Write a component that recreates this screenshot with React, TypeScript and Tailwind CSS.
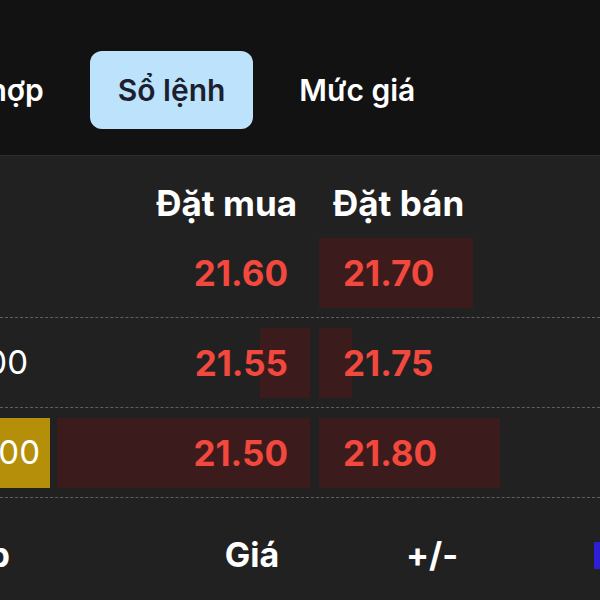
import React from 'react';

interface BookRow {
  volume: string;
  highlight?: boolean;
  buy: string;
  buyBar: number;
  sell: string;
  sellBar: number;
}

const rows: BookRow[] = [
  { volume: '', buy: '21.60', buyBar: 0, sell: '21.70', sellBar: 154 },
  { volume: '1.200', buy: '21.55', buyBar: 50, sell: '21.75', sellBar: 33 },
  { volume: '3.500', highlight: true, buy: '21.50', buyBar: 253, sell: '21.80', sellBar: 181 },
];

const tabs = ['Tổng hợp', 'Sổ lệnh', 'Mức giá'];

const App: React.FC = () => {
  return (
    <div
      className="w-[600px] h-[600px] overflow-hidden bg-[#212121] text-white"
      style={{ fontFamily: 'Inter, "Noto Sans", sans-serif' }}
    >
      {/* Tabs */}
      <div className="h-[156px] bg-[#121212] border-b border-[#2c2c2c] pt-[51px]">
        <div className="flex gap-[18px] ml-[-120px]">
          {tabs.map((tab) => (
            <div
              key={tab}
              className={`h-[78px] px-[28px] flex items-center rounded-[12px] text-[30px] font-semibold whitespace-nowrap ${
                tab === 'Sổ lệnh' ? 'bg-[#bde2fc] text-[#1b1f2e]' : 'text-white'
              }`}
            >
              {tab}
            </div>
          ))}
        </div>
      </div>

      {/* Column headers */}
      <div className="flex h-[72px] items-end pb-[7px] text-[35px] leading-[36px] font-bold">
        <div className="w-[50px] shrink-0" />
        <div className="ml-[7px] w-[253px] shrink-0 flex justify-end pr-[13px] whitespace-nowrap">
          Đặt mua
        </div>
        <div className="ml-[9px] w-[253px] shrink-0 pl-[14px] whitespace-nowrap">Đặt bán</div>
      </div>

      {/* Rows */}
      {rows.map((row) => (
        <div
          key={row.buy}
          className="flex pt-[10px] pb-[9px] border-b border-dashed border-[#5f5f5f]"
        >
          <div
            className={`w-[50px] h-[70px] shrink-0 flex items-center justify-end text-[33px] whitespace-nowrap ${
              row.highlight ? 'bg-[#b58f0a] pr-[10px]' : 'pr-[22px]'
            }`}
          >
            {row.volume}
          </div>
          <div className="ml-[7px] w-[253px] h-[70px] shrink-0 relative flex items-center justify-end pr-[22px]">
            <div
              className="absolute right-0 top-0 h-full bg-[#3b1b1b]"
              style={{ width: row.buyBar }}
            />
            <span className="relative text-[35px] font-bold text-[#f2483e]">{row.buy}</span>
          </div>
          <div className="ml-[9px] w-[253px] h-[70px] shrink-0 relative flex items-center pl-[24px]">
            <div
              className="absolute left-0 top-0 h-full bg-[#3b1b1b]"
              style={{ width: row.sellBar }}
            />
            <span className="relative text-[35px] font-bold text-[#f2483e]">{row.sell}</span>
          </div>
        </div>
      ))}

      {/* Lower headers */}
      <div className="flex items-center pt-[37px] text-[34px] leading-[40px] font-bold">
        <div className="w-[10px] shrink-0 flex justify-end whitespace-nowrap">KL khớp</div>
        <div className="ml-[182px] w-[120px] shrink-0 text-center">Giá</div>
        <div className="ml-[60px] w-[120px] shrink-0 text-center">+/-</div>
        <div className="ml-auto w-[6px] h-[27px] bg-[#2b20d4]" />
      </div>
    </div>
  );
};

export default App;
